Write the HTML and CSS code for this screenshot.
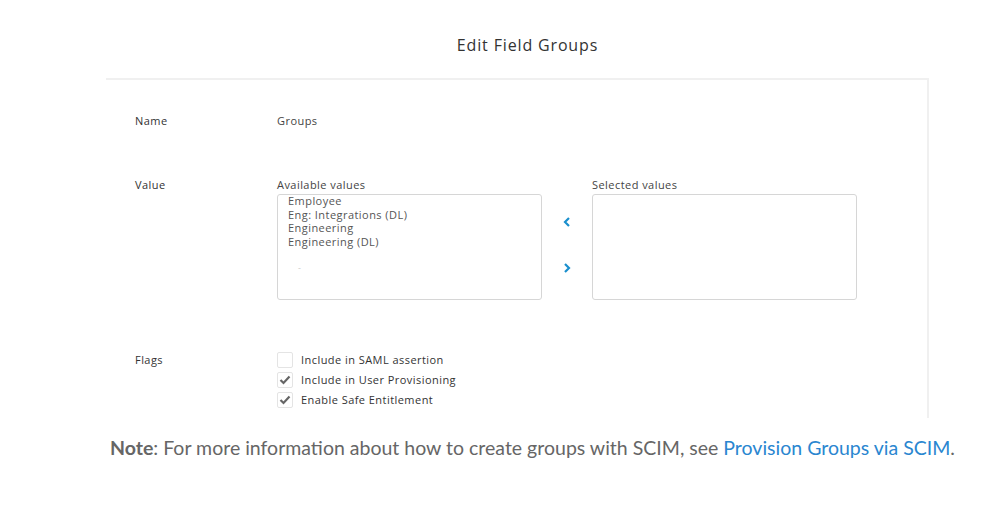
FILE: index.html
```html
<!DOCTYPE html>
<html>
<head>
<meta charset="utf-8">
<link rel="stylesheet" href="styles.css">
</head>
<body>
<div class="page">
  <h1 class="title">Edit Field Groups</h1>
  <div class="frame">
    <div class="row row-name">
      <div class="label">Name</div>
      <div class="content">Groups</div>
    </div>
    <div class="row row-value">
      <div class="label">Value</div>
      <div class="content picker">
        <div class="col">
          <div class="sublabel">Available values</div>
          <div class="listbox">
            <div class="item">Employee</div>
            <div class="item">Eng: Integrations (DL)</div>
            <div class="item">Engineering</div>
            <div class="item">Engineering (DL)</div>
            <div class="dash">-</div>
          </div>
        </div>
        <div class="arrows">
          <svg class="arrow" width="10" height="12" viewBox="0 0 10 12"><path d="M7 2 L3 6 L7 10" fill="none" stroke="#1a8fcd" stroke-width="2.2"/></svg>
          <svg class="arrow" width="10" height="12" viewBox="0 0 10 12"><path d="M3 2 L7 6 L3 10" fill="none" stroke="#1a8fcd" stroke-width="2.2"/></svg>
        </div>
        <div class="col">
          <div class="sublabel">Selected values</div>
          <div class="listbox"></div>
        </div>
      </div>
    </div>
    <div class="row row-flags">
      <div class="label">Flags</div>
      <div class="content flags">
        <div class="flag"><span class="box"></span><span>Include in SAML assertion</span></div>
        <div class="flag"><span class="box"><svg width="14" height="14" viewBox="0 0 14 14"><path d="M2.5 7 L5.5 10 L11.5 3.5" fill="none" stroke="#666" stroke-width="2.2"/></svg></span><span>Include in User Provisioning</span></div>
        <div class="flag"><span class="box"><svg width="14" height="14" viewBox="0 0 14 14"><path d="M2.5 7 L5.5 10 L11.5 3.5" fill="none" stroke="#666" stroke-width="2.2"/></svg></span><span>Enable Safe Entitlement</span></div>
      </div>
    </div>
  </div>
  <p class="note"><b>Note</b>: For more information about how to create groups with SCIM, see <a href="#">Provision Groups via SCIM</a>.</p>
</div>
</body>
</html>
```

FILE: styles.css
```css
html, body {
  margin: 0;
  padding: 0;
  background: #fff;
}
.page {
  width: 999px;
  height: 527px;
  overflow: hidden;
}
.title {
  margin: 0;
  padding-top: 34px;
  height: 44px;
  box-sizing: border-box;
  text-align: center;
  font-family: "Open Sans", sans-serif;
  font-weight: 400;
  font-size: 16px;
  letter-spacing: 0.85px;
  line-height: 22px;
  color: #333;
  padding-left: 56px;
}
.frame {
  margin-left: 106px;
  margin-top: 34px;
  width: 823px;
  height: 340px;
  box-sizing: border-box;
  border-top: 2px solid #f0f0f0;
  border-right: 2px solid #f0f0f0;
  font-family: "Open Sans", sans-serif;
  font-size: 11px;
  letter-spacing: 0.45px;
  color: #333;
}
.row {
  display: flex;
}
.label {
  width: 142px;
  padding-left: 29px;
  flex: none;
  box-sizing: content-box;
  line-height: 14px;
}
.content {
  line-height: 14px;
  color: #444;
}
.row-name {
  padding-top: 34px;
}
.row-value {
  padding-top: 50px;
}
.picker {
  display: flex;
}
.col {
  display: flex;
  flex-direction: column;
}
.sublabel {
  line-height: 14px;
  height: 16px;
  color: #444;
}
.listbox {
  width: 265px;
  height: 106px;
  box-sizing: border-box;
  border: 1px solid #d6d6d6;
  border-radius: 3px;
  padding: 0 0 0 10px;
  color: #555;
}
.item {
  line-height: 13.7px;
}
.item:first-child {
  margin-top: -1px;
}
.dash {
  margin-top: 12px;
  margin-left: 10px;
  color: #ccc;
  font-size: 9px;
}
.arrows {
  width: 50px;
  display: flex;
  flex-direction: column;
  align-items: center;
  padding-top: 38px;
  gap: 34px;
}
.arrow {
  display: block;
}
.row-flags {
  padding-top: 51.5px;
}
.row-flags .label {
  padding-top: 1px;
}
.flags {
  display: flex;
  flex-direction: column;
  gap: 4px;
}
.flag {
  display: flex;
  align-items: center;
  gap: 8px;
  height: 16px;
  color: #333;
}
.box {
  width: 16px;
  height: 16px;
  box-sizing: border-box;
  border: 1px solid #e4e4e4;
  border-radius: 2px;
  display: flex;
  align-items: center;
  justify-content: center;
  background: #fff;
}
.note {
  margin: 17.5px 0 0 110px;
  font-family: "Lato", sans-serif;
  font-size: 19.5px;
  line-height: 24px;
  color: #666;
}
.note b {
  font-weight: 700;
}
.note a {
  color: #2a86d0;
  text-decoration: none;
}
```
